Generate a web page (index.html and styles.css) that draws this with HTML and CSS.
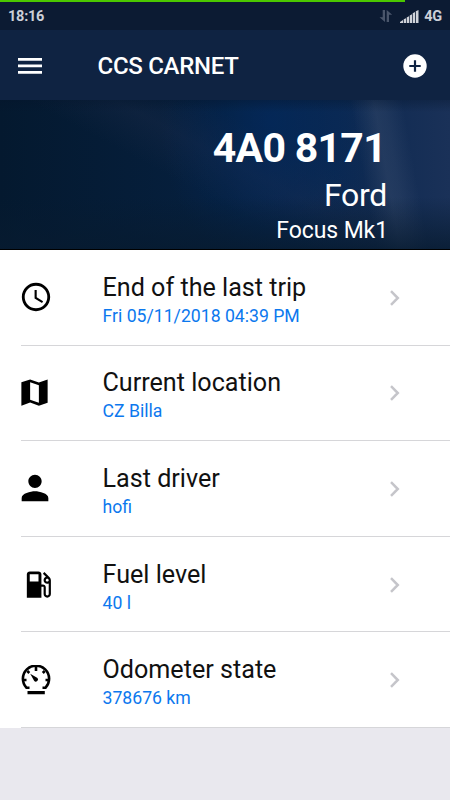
FILE: index.html
```html
<!DOCTYPE html>
<html lang="en">
<head>
<meta charset="utf-8">
<title>CCS CARNET</title>
<link rel="stylesheet" href="styles.css">
</head>
<body>
<div class="status">
  <div class="progress"></div>
  <span>18:16</span>
  <div class="signals">
    <svg class="data" width="14" height="14" viewBox="0 0 14 14"><path d="M6 1v12L.5 8.200h3.200V1zM7.700 13V1l5.500 4.800H10V13z"/></svg>
    <svg class="bars" width="19" height="13" viewBox="0 0 19 13"><path d="M0 13v-1l3-2v3zM3.700 9.200l2.300-1V13H3.700zM6.700 7.500L9 6.200V13H6.700zM9.700 5.500L12 4.200V13H9.700zM12.700 3.300L15 2v11h-2.300zM15.800 1.200L18.500 0v13h-2.700z"/></svg>
    <span>4G</span>
  </div>
</div>
<header class="bar">
  <svg class="menu" width="24" height="16" viewBox="0 0 24 16"><path d="M0 0h24v2.700H0zM0 6.600h24v2.700H0zM0 13.100h24v2.700H0z"/></svg>
  <h1>CCS CARNET</h1>
  <svg class="add" width="24" height="24" viewBox="0 0 24 24"><circle cx="12" cy="12" r="11.700"/><path d="M12 6.300v11.400M6.300 12h11.400"/></svg>
</header>
<section class="hero">
  <div class="plate">4A0 8171</div>
  <div class="make">Ford</div>
  <div class="model">Focus Mk1</div>
</section>
<main class="list">
  <div class="row">
    <div class="icon"><svg width="34" height="34" viewBox="0 0 24 24"><path d="M12 2C6.500 2 2 6.500 2 12s4.500 10 10 10 10-4.500 10-10S17.500 2 12 2zm0 18a8 8 0 1 1 0-16 8 8 0 0 1 0 16z"/><path d="M12.500 7H11v6l5.250 3.150.75-1.230-4.500-2.670z"/></svg></div>
    <div class="item"><div class="text"><div class="title">End of the last trip</div><div class="value">Fri 05/11/2018 04:39 PM</div></div><svg class="chev" width="12" height="16" viewBox="0 0 12 16"><path d="M2 1.200L8.800 8 2 14.800"/></svg></div>
  </div>
  <div class="row">
    <div class="icon map"><svg width="35" height="35" viewBox="0 0 24 24"><path d="M21 3l-6 2.100L9 3 3 5v16l6-2.100 6 2.100 6-2zM15 19l-6-2.100V5l6 2.100z"/></svg></div>
    <div class="item"><div class="text"><div class="title">Current location</div><div class="value">CZ Billa</div></div><svg class="chev" width="12" height="16" viewBox="0 0 12 16"><path d="M2 1.200L8.800 8 2 14.800"/></svg></div>
  </div>
  <div class="row">
    <div class="icon person"><svg width="40" height="40" viewBox="0 0 24 24"><path d="M12 12c2.210 0 4-1.790 4-4s-1.790-4-4-4-4 1.790-4 4 1.790 4 4 4zm0 2c-2.670 0-8 1.340-8 4v2h16v-2c0-2.660-5.330-4-8-4z"/></svg></div>
    <div class="item"><div class="text"><div class="title">Last driver</div><div class="value">hofi</div></div><svg class="chev" width="12" height="16" viewBox="0 0 12 16"><path d="M2 1.200L8.800 8 2 14.800"/></svg></div>
  </div>
  <div class="row">
    <div class="icon fuel"><svg width="35" height="35" viewBox="0 0 24 24"><path d="M19.770 7.230l.010-.010-3.720-3.720L15 4.560l2.110 2.110c-.940.360-1.610 1.260-1.610 2.330 0 1.380 1.120 2.500 2.500 2.500.360 0 .690-.080 1-.210v7.210c0 .550-.450 1-1 1s-1-.450-1-1V14c0-1.100-.900-2-2-2h-1V5c0-1.100-.900-2-2-2H6c-1.100 0-2 .900-2 2v16h10v-7.500h1.500v5c0 1.380 1.120 2.500 2.500 2.500s2.500-1.120 2.500-2.500V9c0-.690-.280-1.320-.730-1.770zM12 10H6V5h6v5zm6 0c-.550 0-1-.450-1-1s.450-1 1-1 1 .450 1 1-.450 1-1 1z"/></svg></div>
    <div class="item"><div class="text"><div class="title">Fuel level</div><div class="value">40 l</div></div><svg class="chev" width="12" height="16" viewBox="0 0 12 16"><path d="M2 1.200L8.800 8 2 14.800"/></svg></div>
  </div>
  <div class="row last">
    <div class="icon"><svg width="30" height="30" viewBox="0 0 30 30"><g class="dial"><path d="M8.500 22.700H5.400A13.100 13.100 0 1 1 24.600 22.700H21.500"/><path d="M15 2v4M1.500 15h4M28.500 15h-4M21.800 8l1.900-2M8.300 8L6.300 6"/></g><path d="M9.200 8.800l7.300 4.100a2.200 2.200 0 1 1-3.400 2.800zM6.500 26h17.300v3.200H6.500z"/></svg></div>
    <div class="item"><div class="text"><div class="title">Odometer state</div><div class="value">378676 km</div></div><svg class="chev" width="12" height="16" viewBox="0 0 12 16"><path d="M2 1.200L8.800 8 2 14.800"/></svg></div>
  </div>
</main>
</body>
</html>
```

FILE: styles.css
```css
* { box-sizing: border-box; }
body {
  margin: 0;
  width: 450px;
  height: 800px;
  overflow: hidden;
  background: #e9e8ee;
  font-family: Roboto, sans-serif;
  color: #111;
}
svg { display: block; flex: none; }
.status {
  position: relative;
  height: 30px;
  padding: 2px 8px 0 8px;
  display: flex;
  align-items: center;
  justify-content: space-between;
  background: #0c1b33;
  color: #ccd0d8;
  font-size: 14.5px;
  font-weight: 700;
  letter-spacing: -.25px;
}
.progress {
  position: absolute;
  left: 0;
  top: 0;
  width: 405px;
  height: 2px;
  background: #4bc800;
}
.signals { display: flex; align-items: center; }
.data { fill: #4a566b; margin-right: 7px; }
.bars { fill: #d0d3d9; margin-right: 5px; }
.bar {
  height: 70px;
  padding: 2px 23px 0 18px;
  display: flex;
  align-items: center;
  background: #0f2342;
  color: #fff;
}
.menu { fill: #fff; }
.bar h1 {
  margin: 0 auto 0 55.5px;
  font-size: 24px;
  font-weight: 500;
  line-height: 30px;
  letter-spacing: -.28px;
}
.add circle { fill: #fff; }
.add path { stroke: #0f2342; stroke-width: 2.2; }
.hero {
  height: 150px;
  padding: 24px 63px 0 0;
  text-align: right;
  color: #fff;
  border-bottom: 1px solid #000;
  background:
    linear-gradient(180deg, rgba(4, 20, 42, .35), transparent 12px, transparent 65%, rgba(7, 27, 48, .8)),
    linear-gradient(80deg, transparent 79%, rgba(80, 96, 125, .28) 84%, rgba(75, 92, 122, .24) 86%, transparent 90%),
    radial-gradient(ellipse 110px 150px at 270px 20px, rgba(0, 44, 104, .5), transparent),
    linear-gradient(28deg, transparent 42%, rgba(38, 48, 78, .25) 54%, transparent 66%),
    linear-gradient(90deg, #04192f 0, #06203f 50%, #0b2850 75%, #1a3158 100%);
}
.plate { font-size: 41px; font-weight: 700; line-height: 48px; padding-right: 1px; letter-spacing: -.7px; }
.make { font-size: 32px; line-height: 38px; margin-top: 4px; letter-spacing: -.3px; }
.model { font-size: 23px; line-height: 28px; margin-top: 3px; margin-right: -1px; letter-spacing: -.1px; }
.list { background: #fff; height: 478px; }
.row { display: flex; height: 95.6px; padding-left: 21px; }
.icon {
  width: 81.5px;
  flex: none;
  display: flex;
  align-items: center;
  border-bottom: 1px solid #d6d6d9;
}
.icon svg { margin-left: -2.5px; }
.icon.map svg { margin-left: -4.3px; }
.icon.person svg { margin-left: -6.5px; }
.icon.fuel svg { margin-left: .3px; }
.last .icon svg { margin-left: -.5px; }
.dial { fill: none; stroke: #000; stroke-width: 2.6; }
.item {
  flex: 1;
  display: flex;
  align-items: center;
  justify-content: space-between;
  padding-right: 49px;
  border-bottom: 1px solid #d6d6d9;
}
.title { font-size: 25.15px; line-height: 30px; margin-top: 5px; }
.value { font-size: 17.65px; line-height: 22px; margin-top: 2px; color: #0c78ee; }
.chev { fill: none; stroke: #c5c5ca; stroke-width: 2.5; margin-top: 1px; }
```
